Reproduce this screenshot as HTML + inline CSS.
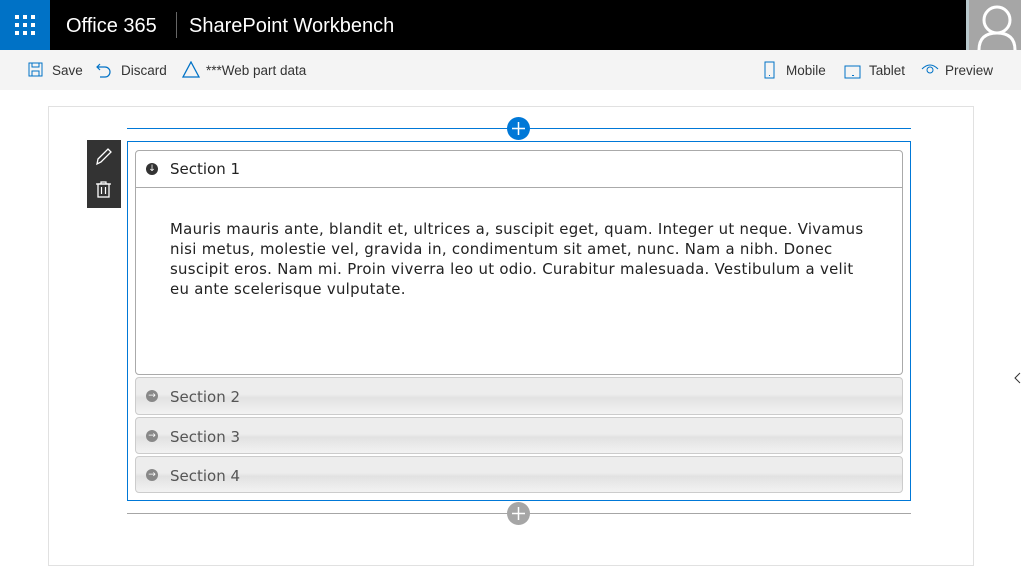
<!DOCTYPE html>
<html><head><style>
*{margin:0;padding:0;box-sizing:border-box}
body{width:1021px;height:553px;overflow:hidden;background:#fff;font-family:"Liberation Sans",sans-serif;position:relative}
.top{position:absolute;left:0;top:0;width:1021px;height:50px;background:#000}
.waffle{position:absolute;left:0;top:0;width:50px;height:50px;background:#0072c6}
.tb{position:absolute;top:50px;left:0;width:1021px;height:40px;background:#f4f4f4}
.tbi{position:absolute;top:63px;font-size:13.5px;color:#333}
.abs{position:absolute}
.sec{position:absolute;left:135px;width:768px;border:1px solid #ccc;border-radius:4px;background:linear-gradient(#ededed 0,#ededed 45%,#e2e2e2 55%,#f2f2f2 100%);font-family:"DejaVu Sans",Verdana,sans-serif;font-size:15px;color:#555}
.sec span{position:absolute;left:34px;top:10px}
.ic{position:absolute;left:10px;top:12px;width:12px;height:12px;border-radius:50%;background:#888;color:#fff;font-size:9px;line-height:12px;text-align:center}
</style></head><body>
<div class="top"></div>
<div class="waffle"><svg width="50" height="50">
<g fill="#fff"><rect x="15" y="15" width="4" height="4"/><rect x="23" y="15" width="4" height="4"/><rect x="31" y="15" width="4" height="4"/><rect x="15" y="23" width="4" height="4"/><rect x="23" y="23" width="4" height="4"/><rect x="31" y="23" width="4" height="4"/><rect x="15" y="31" width="4" height="4"/><rect x="23" y="31" width="4" height="4"/><rect x="31" y="31" width="4" height="4"/></g></svg></div>
<div class="abs" style="left:66px;top:15px;color:#fff;font-size:20px">Office 365</div>
<div class="abs" style="left:176px;top:12px;width:1px;height:26px;background:#666"></div>
<div class="abs" style="left:189px;top:15px;color:#fff;font-size:20px">SharePoint Workbench</div>
<div class="abs" style="left:966px;top:0;width:55px;height:50px;background:#a6a6a6;border-left:3px solid #b8c8cc"><svg width="52" height="50"><circle cx="28" cy="20" r="13" fill="none" stroke="#fff" stroke-width="3"/><path d="M10 50 Q10 33 28 33 Q46 33 46 50" fill="none" stroke="#fff" stroke-width="3"/></svg></div>
<div class="tb"></div>
<svg class="abs" style="left:28px;top:62px" width="16" height="16"><rect x="1" y="1" width="13" height="13" fill="none" stroke="#0072c6"/><rect x="4" y="1" width="7" height="4" fill="none" stroke="#0072c6"/><rect x="4" y="9" width="7" height="5" fill="none" stroke="#0072c6"/></svg>
<div class="tbi" style="left:52px">Save</div>
<svg class="abs" style="left:96px;top:61px" width="16" height="18"><path d="M4 3 L1 6 L4 9 M1 6 H9 A5 5 0 0 1 9 16 H4" fill="none" stroke="#0072c6" stroke-width="1.2"/></svg>
<div class="tbi" style="left:121px">Discard</div>
<svg class="abs" style="left:182px;top:61px" width="18" height="17"><path d="M9 1 L17 16 H1 Z" fill="none" stroke="#0072c6" stroke-width="1.3"/></svg>
<div class="tbi" style="left:206px">***Web part data</div>
<svg class="abs" style="left:764px;top:61px" width="12" height="18"><rect x="1" y="1" width="9" height="16" fill="none" stroke="#0072c6"/><rect x="5" y="14" width="1" height="1" fill="#0072c6"/></svg>
<div class="tbi" style="left:786px">Mobile</div>
<svg class="abs" style="left:844px;top:65px" width="18" height="14"><rect x="1" y="1" width="15" height="12" fill="none" stroke="#0072c6"/><rect x="8" y="10" width="2" height="1" fill="#0072c6"/></svg>
<div class="tbi" style="left:869px">Tablet</div>
<svg class="abs" style="left:921px;top:63px" width="18" height="12"><path d="M1 6 Q9 -2 17 6" fill="none" stroke="#0072c6"/><circle cx="9" cy="7" r="3" fill="none" stroke="#0072c6"/></svg>
<div class="tbi" style="left:945px">Preview</div>
<div class="abs" style="left:48px;top:106px;width:926px;height:460px;border:1px solid #e1e1e1"></div>
<div class="abs" style="left:127px;top:128px;width:784px;height:1px;background:#0078d7"></div>
<div class="abs" style="left:507px;top:117px;width:23px;height:23px;border-radius:50%;background:#0078d7"><svg width="23" height="23"><path d="M11.5 5V18M5 11.5H18" stroke="#fff" stroke-width="1.5"/></svg></div>
<div class="abs" style="left:127px;top:141px;width:784px;height:360px;border:1px solid #0078d7"></div>
<div class="abs" style="left:87px;top:140px;width:34px;height:68px;background:#333"><svg width="34" height="68"><path d="M10 24 L11 19 L21 9 L24 12 L14 22 Z" fill="none" stroke="#fff" stroke-width="1.3"/><rect x="11" y="44" width="11" height="13" fill="none" stroke="#fff" stroke-width="1.3"/><path d="M9 44H24M14 44V42H19V44M14.5 47V54M18.5 47V54" stroke="#fff" stroke-width="1.2" fill="none"/></svg></div>
<div class="abs" style="left:135px;top:150px;width:768px;height:225px;border:1px solid #aaa;border-radius:4px;background:#fff;font-family:'DejaVu Sans',Verdana,sans-serif;font-size:15px;color:#222">
<div style="height:37px;border-bottom:1px solid #aaa;position:relative"><div class="ic" style="background:#333;top:12px">↓</div><span style="position:absolute;left:34px;top:9px">Section 1</span></div>
<div style="position:absolute;left:34px;top:68px;width:704px;line-height:20px;font-size:14.9px;letter-spacing:0.3px">Mauris mauris ante, blandit et, ultrices a, suscipit eget, quam. Integer ut neque. Vivamus nisi metus, molestie vel, gravida in, condimentum sit amet, nunc. Nam a nibh. Donec suscipit eros. Nam mi. Proin viverra leo ut odio. Curabitur malesuada. Vestibulum a velit eu ante scelerisque vulputate.</div>
</div>
<div class="sec" style="top:377px;height:38px"><div class="ic">→</div><span>Section 2</span></div>
<div class="sec" style="top:417px;height:37px"><div class="ic">→</div><span>Section 3</span></div>
<div class="sec" style="top:456px;height:37px"><div class="ic">→</div><span>Section 4</span></div>
<div class="abs" style="left:127px;top:513px;width:784px;height:1px;background:#a6a6a6"></div>
<div class="abs" style="left:507px;top:502px;width:23px;height:23px;border-radius:50%;background:#a6a6a6"><svg width="23" height="23"><path d="M11.5 5V18M5 11.5H18" stroke="#fff" stroke-width="1.5"/></svg></div>
<svg class="abs" style="left:1014px;top:372px" width="7" height="12"><path d="M6 1 L1 6 L6 11" fill="none" stroke="#333"/></svg>
</body></html>
